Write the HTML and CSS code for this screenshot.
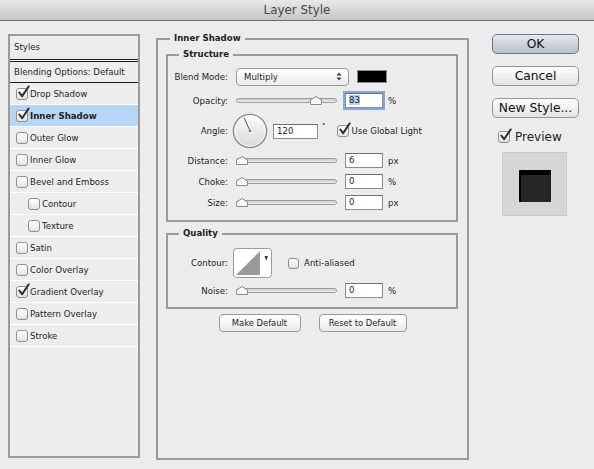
FILE: index.html
```html
<!DOCTYPE html>
<html lang="en">
<head>
  <meta charset="UTF-8" />
  <title>Layer Style</title>
  <link rel="stylesheet" href="styles.css">
</head>
<body>

  <div class="titlebar">Layer Style</div>

  <div class="dialog">

    <aside class="styles-panel">
      <div class="list-head">Styles</div>
      <div class="list-rule"></div>
      <div class="list-blend">Blending Options: Default</div>
      <ul class="effects">
        <li><span class="check on"><svg viewBox="0 0 14 14"><path d="M2.5 7 L5.5 11 L12.5 0.5"/></svg></span>Drop Shadow</li>
        <li class="selected"><span class="check on"><svg viewBox="0 0 14 14"><path d="M2.5 7 L5.5 11 L12.5 0.5"/></svg></span>Inner Shadow</li>
        <li><span class="check"></span>Outer Glow</li>
        <li><span class="check"></span>Inner Glow</li>
        <li><span class="check"></span>Bevel and Emboss</li>
        <li class="sub"><span class="check"></span>Contour</li>
        <li class="sub"><span class="check"></span>Texture</li>
        <li><span class="check"></span>Satin</li>
        <li><span class="check"></span>Color Overlay</li>
        <li><span class="check on"><svg viewBox="0 0 14 14"><path d="M2.5 7 L5.5 11 L12.5 0.5"/></svg></span>Gradient Overlay</li>
        <li><span class="check"></span>Pattern Overlay</li>
        <li><span class="check"></span>Stroke</li>
      </ul>
    </aside>

    <fieldset class="group main">
      <legend>Inner Shadow</legend>

      <fieldset class="group structure">
        <legend>Structure</legend>

        <div class="row blend-row">
          <span class="lbl">Blend Mode:</span>
          <div class="select">
            Multiply
            <svg class="updown" width="6" height="9" viewBox="0 0 6 9"><path d="M0.5 3.5 L3 0.5 L5.5 3.5 Z M0.5 5.5 L3 8.5 L5.5 5.5 Z"/></svg>
          </div>
          <span class="swatch"></span>
        </div>

        <div class="row opacity-row">
          <span class="lbl">Opacity:</span>
          <div class="slider"><span class="rail"></span><span class="thumb-range"><svg class="thumb" style="left: 83%" width="12" height="9" viewBox="0 0 12 9"><path d="M0.5 8.5 V4 L6 0.5 L11.5 4 V8.5 Z"/></svg></span></div>
          <span class="field focus"><span class="sel">83</span></span>
          <span class="unit">%</span>
        </div>

        <div class="row angle-row">
          <span class="lbl">Angle:</span>
          <svg class="dial" width="36" height="36" viewBox="0 0 36 36">
            <defs>
              <linearGradient id="dialFill" x1="0" y1="0" x2="0" y2="1">
                <stop offset="0" stop-color="#fbfbfb"/>
                <stop offset="1" stop-color="#d9d9d9"/>
              </linearGradient>
            </defs>
            <circle cx="18" cy="18" r="16.6" fill="url(#dialFill)" stroke="#8c8c8c" stroke-width="1.4"/>
            <circle cx="18" cy="18" r="15.2" fill="none" stroke="#ffffff" stroke-width="0.8"/>
            <line x1="18" y1="18" x2="12" y2="4.5" stroke="#5a5a5a" stroke-width="1"/>
            <circle cx="18" cy="18" r="1.1" fill="#5a5a5a"/>
          </svg>
          <span class="field wide">120</span>
          <span class="deg">°</span>
          <span class="check on global"><svg viewBox="0 0 14 14"><path d="M2.5 7 L5.5 11 L12.5 0.5"/></svg></span>
          <span>Use Global Light</span>
        </div>

        <div class="row">
          <span class="lbl">Distance:</span>
          <div class="slider"><span class="rail"></span><span class="thumb-range"><svg class="thumb" style="left: 0%" width="12" height="9" viewBox="0 0 12 9"><path d="M0.5 8.5 V4 L6 0.5 L11.5 4 V8.5 Z"/></svg></span></div>
          <span class="field">6</span>
          <span class="unit">px</span>
        </div>

        <div class="row">
          <span class="lbl">Choke:</span>
          <div class="slider"><span class="rail"></span><span class="thumb-range"><svg class="thumb" style="left: 0%" width="12" height="9" viewBox="0 0 12 9"><path d="M0.5 8.5 V4 L6 0.5 L11.5 4 V8.5 Z"/></svg></span></div>
          <span class="field">0</span>
          <span class="unit">%</span>
        </div>

        <div class="row">
          <span class="lbl">Size:</span>
          <div class="slider"><span class="rail"></span><span class="thumb-range"><svg class="thumb" style="left: 0%" width="12" height="9" viewBox="0 0 12 9"><path d="M0.5 8.5 V4 L6 0.5 L11.5 4 V8.5 Z"/></svg></span></div>
          <span class="field">0</span>
          <span class="unit">px</span>
        </div>
      </fieldset>

      <fieldset class="group quality">
        <legend>Quality</legend>

        <div class="row contour-row">
          <span class="lbl">Contour:</span>
          <svg class="contour" width="39" height="30" viewBox="0 0 39 30">
            <rect x="0.5" y="0.5" width="38" height="29" rx="3" fill="#ffffff" stroke="#9a9a9a"/>
            <polygon points="3,27 27,3 27,27" fill="#9b9b9b"/>
            <polygon points="31.5,8 35,8 33.3,13" fill="#3a3a3a"/>
          </svg>
          <span class="check anti"></span>
          <span>Anti-aliased</span>
        </div>

        <div class="row noise-row">
          <span class="lbl">Noise:</span>
          <div class="slider"><span class="rail"></span><span class="thumb-range"><svg class="thumb" style="left: 0%" width="12" height="9" viewBox="0 0 12 9"><path d="M0.5 8.5 V4 L6 0.5 L11.5 4 V8.5 Z"/></svg></span></div>
          <span class="field">0</span>
          <span class="unit">%</span>
        </div>
      </fieldset>

      <div class="defaults">
        <button class="mini-btn make">Make Default</button>
        <button class="mini-btn reset">Reset to Default</button>
      </div>
    </fieldset>

    <div class="actions">
      <button class="btn default">OK</button>
      <button class="btn">Cancel</button>
      <button class="btn">New Style...</button>
      <div class="preview-toggle">
        <span class="check on"><svg viewBox="0 0 14 14"><path d="M2.5 7 L5.5 11 L12.5 0.5"/></svg></span>
        <span>Preview</span>
      </div>
      <div class="preview">
        <span class="preview-square"></span>
      </div>
    </div>

  </div>

</body>
</html>
```

FILE: styles.css
```css
body {
  margin: 0;
  width: 594px;
  height: 469px;
  overflow: hidden;
  background: #ececec;
  font-family: 'DejaVu Sans', sans-serif;
  font-size: 8.6px;
  color: #1e1e1e;
}

.titlebar {
  height: 20px;
  line-height: 20px;
  text-align: center;
  font-size: 11.9px;
  color: #474747;
  background: linear-gradient(#e9e9e9, #c5c5c5);
  border-bottom: 1px solid #6f6f6f;
}

.dialog {
  display: flex;
  align-items: flex-start;
  padding: 13px 0 0 8px;
}

/* left list of effects */

.styles-panel {
  flex: none;
  width: 132px;
  height: 424px;
  box-sizing: border-box;
  border: 2px solid #9b9b9b;
  background: #ededed;
}

.list-head {
  height: 23px;
  line-height: 22px;
  padding-left: 4px;
}

.list-rule {
  height: 1px;
  border-top: 1px solid #1c1c1c;
  border-bottom: 1px solid #1c1c1c;
  background: #f7f7f7;
}

.list-blend {
  height: 20px;
  line-height: 20px;
  padding-left: 4px;
  border-bottom: 1px solid #1c1c1c;
}

.effects {
  list-style: none;
  margin: 0;
  padding: 0;
}

.effects li {
  display: flex;
  align-items: center;
  height: 21px;
  padding-left: 6px;
  border-bottom: 1px solid #ffffff;
}

.effects li.sub {
  padding-left: 18px;
}

.effects li.selected {
  background: #b8d4f7;
  font-weight: bold;
}

.check {
  position: relative;
  flex: none;
  width: 12px;
  height: 12px;
  box-sizing: border-box;
  margin-right: 2px;
  border: 1px solid #8e8e8e;
  border-radius: 3px;
  background: linear-gradient(#ffffff, #e2e2e2);
}

.check svg {
  position: absolute;
  left: 0;
  top: -3px;
  width: 13px;
  height: 13px;
  overflow: visible;
}

.check svg path {
  fill: none;
  stroke: #2b2b2b;
  stroke-width: 2.2;
  stroke-linecap: round;
  stroke-linejoin: round;
}

/* middle settings */

.group {
  margin: 0;
  padding: 0;
  min-width: 0;
  box-sizing: border-box;
  border: 2px solid #9a9a9a;
}

.group legend {
  padding: 0 4px;
  line-height: 13px;
  font-weight: bold;
}

.main {
  flex: none;
  width: 313px;
  height: 428px;
  margin: -2px 0 0 16px;
}

.main > legend {
  margin-left: 12px;
}

.structure,
.quality {
  width: 292px;
  margin-left: 8px;
}

.structure legend,
.quality legend {
  margin-left: 11px;
}

.structure {
  margin-top: 3px;
  padding: 5px 0 7px;
}

.quality {
  margin-top: 5px;
  padding: 8px 0 6px;
}

.row {
  display: flex;
  align-items: center;
  height: 21px;
}

.opacity-row {
  margin-top: 3px;
}

.angle-row {
  height: 38px;
  margin-top: 1px;
}

.contour-row {
  height: 30px;
}

.noise-row {
  margin-top: 2px;
}

.lbl {
  flex: none;
  width: 60px;
  margin-right: 8px;
  text-align: right;
}

.select {
  display: flex;
  align-items: center;
  justify-content: space-between;
  width: 113px;
  height: 18px;
  box-sizing: border-box;
  padding: 0 6px 0 7px;
  border: 1px solid #9a9a9a;
  border-radius: 4px;
  background: linear-gradient(#ffffff, #ebebeb);
}

.updown path {
  fill: #3a3a3a;
}

.swatch {
  width: 30px;
  height: 13px;
  margin-left: 8px;
  box-sizing: border-box;
  border: 1px solid #8a8a8a;
  background: #000000;
}

.slider {
  position: relative;
  display: flex;
  align-items: center;
  width: 101px;
  height: 12px;
  margin-right: 8px;
}

.rail {
  flex: 1;
  height: 5px;
  box-sizing: border-box;
  border: 1px solid #9c9c9c;
  border-radius: 3px;
  background: linear-gradient(#c9c9c9, #ececec);
}

.thumb-range {
  position: absolute;
  left: 0;
  right: 12px;
  top: 0;
  bottom: 0;
}

.thumb {
  position: absolute;
  top: 1px;
}

.thumb path {
  fill: #fbfbfb;
  stroke: #8a8a8a;
}

.field {
  width: 38px;
  height: 15px;
  box-sizing: border-box;
  padding-left: 3px;
  border: 1px solid #8c8c8c;
  border-top-color: #6e6e6e;
  background: #ffffff;
  line-height: 13px;
}

.field.wide {
  width: 45px;
  margin-left: 5px;
}

.field.focus {
  box-shadow: 0 0 0 2px #84a9d9;
}

.sel {
  background: #b5cff0;
}

.unit {
  margin-left: 5px;
}

.dial {
  flex: none;
  margin-left: -4px;
}

.deg {
  align-self: flex-start;
  margin: 10px 0 0 4px;
  font-size: 7px;
}

.check.global {
  margin: 0 3px 0 11px;
}

.contour {
  flex: none;
  margin-left: -3px;
}

.check.anti {
  margin: 0 5px 0 16px;
  width: 11px;
  height: 11px;
}

.defaults {
  display: flex;
  justify-content: center;
  gap: 18px;
  margin-top: 5px;
}

.mini-btn {
  height: 18px;
  padding: 0;
  border: 1px solid #999999;
  border-radius: 4px;
  background: linear-gradient(#ffffff, #e9e9e9);
  font-family: 'DejaVu Sans', sans-serif;
  font-size: 8.4px;
  color: #1e1e1e;
}

.mini-btn.make {
  width: 82px;
}

.mini-btn.reset {
  width: 88px;
}

/* right buttons */

.actions {
  flex: none;
  display: flex;
  flex-direction: column;
  width: 87px;
  margin-left: 23px;
}

.btn {
  height: 20px;
  margin-bottom: 12px;
  padding: 0;
  border: 1px solid #969696;
  border-radius: 5px;
  background: linear-gradient(#fefefe, #e2e2e2);
  font-family: 'DejaVu Sans', sans-serif;
  font-size: 12.3px;
  color: #111111;
}

.btn.default {
  border-color: #6d7582;
  background: linear-gradient(#e6e9ee, #b6bfca);
}

.preview-toggle {
  display: flex;
  align-items: center;
  height: 18px;
  margin: -2px 0 0 6px;
  font-size: 12px;
}

.preview-toggle .check {
  margin-right: 5px;
}

.preview {
  display: flex;
  align-items: center;
  justify-content: center;
  width: 65px;
  height: 64px;
  box-sizing: border-box;
  margin: 6px 0 0 10px;
  padding-top: 4px;
  border: 1px solid #cacaca;
  background: #d6d6d6;
}

.preview-square {
  width: 32px;
  height: 32px;
  background: #262626;
  box-shadow: inset 2px 5px 0 #000000;
}
```
